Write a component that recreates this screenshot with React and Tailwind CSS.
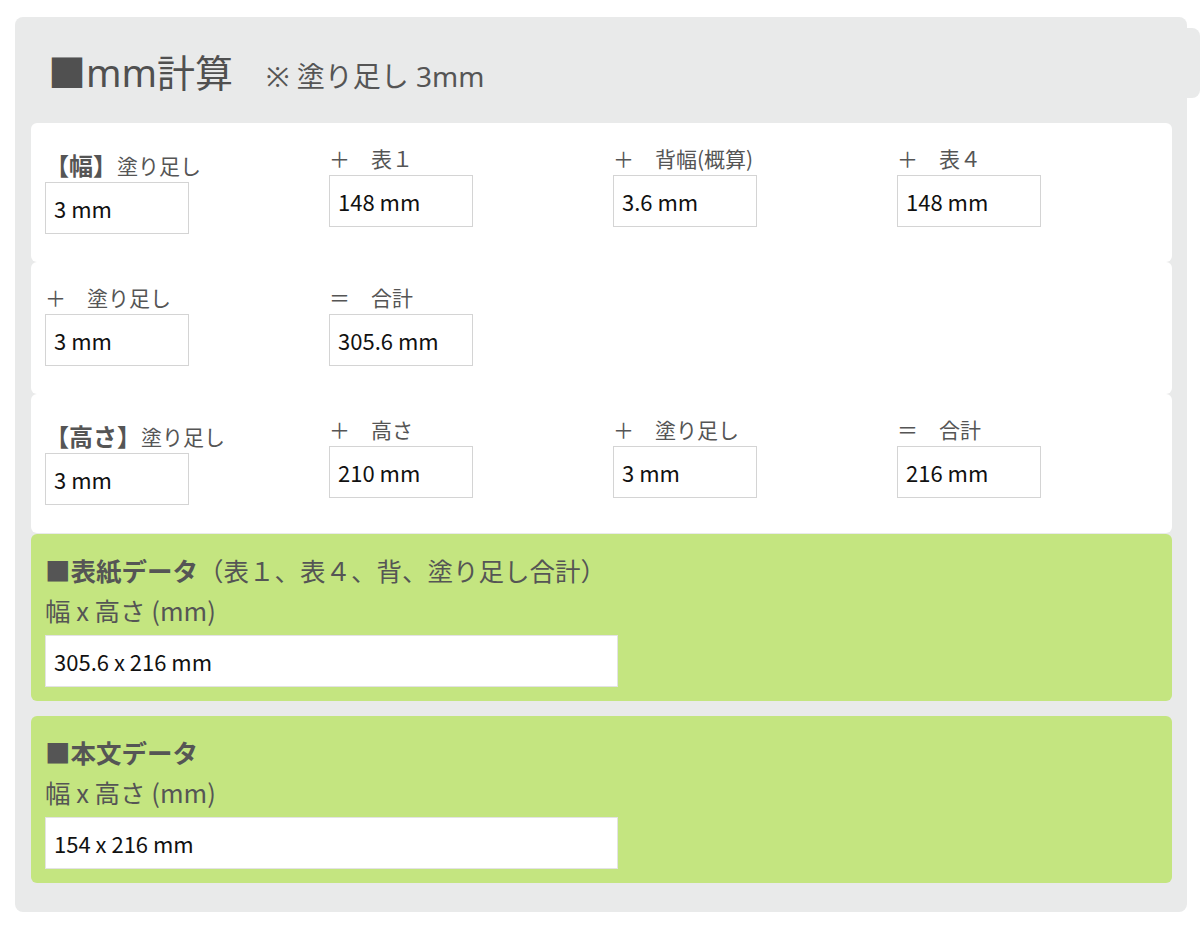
import React from 'react';

const jp = { fontFamily: '"Noto Sans CJK JP", "Noto Sans", sans-serif' };
const latin = { fontFamily: '"Noto Sans", "Noto Sans CJK JP", sans-serif' };

function Field({ label, value, first }) {
  return (
    <div className="w-[284px] shrink-0">
      {first ? (
        <div className="h-[38px] flex items-end pb-[3px] text-[#555] text-[21px] leading-[28px]">
          <span className="font-bold text-[24px]">【{first}】</span>
          <span>{label}</span>
        </div>
      ) : (
        <div className="h-[31px] text-[#555] text-[21px] leading-[28px] whitespace-pre">{label}</div>
      )}
      <div className="w-[144px] h-[52px] border border-[#d4d4d4] bg-white flex items-center px-[8px] text-[22px] text-[#111]">
        {value}
      </div>
    </div>
  );
}

function Card({ children }) {
  return (
    <div className="bg-white rounded-[6px] pl-[14px] pt-[21px] pb-[28px] flex items-start">
      {children}
    </div>
  );
}

function GreenCard({ title, note, value }) {
  return (
    <div className="bg-[#c4e580] rounded-[6px] pl-[14px] pt-[16px] pb-[14px]">
      <div className="text-[25.5px] leading-[40px] text-[#555]">
        <span className="font-bold">{title}</span>
        {note}
      </div>
      <div className="text-[25.5px] leading-[40px] text-[#555]">幅 x 高さ (mm)</div>
      <div className="mt-[5px] w-[573px] h-[52px] bg-white border border-[#e3e3e3] flex items-center px-[8px] text-[22px] text-[#111]">
        {value}
      </div>
    </div>
  );
}

export default function App() {
  return (
    <div className="min-h-screen bg-white pt-[17px] pl-[15px]" style={jp}>
      <div className="w-[1172px] bg-[#e9eaea] rounded-[8px] pt-[11px] pb-[29px]">
        {/* 見出し */}
        <div className="-mr-[13px] h-[70px] bg-[#e9eaea] rounded-r-[8px] pl-[33px] pt-[25px] flex items-baseline">
          <span className="text-[38px] leading-none text-[#505050]" style={latin}>
            ■mm計算
          </span>
          <span className="ml-[33px] text-[28px] leading-none text-[#555]" style={latin}>
            ※ 塗り足し 3mm
          </span>
        </div>

        <div className="mt-[25px] ml-[16px] mr-[15px]">
          {/* 幅 */}
          <Card>
            <Field first="幅" label="塗り足し" value="3 mm" />
            <Field label="＋　表１" value="148 mm" />
            <Field label="＋　背幅(概算)" value="3.6 mm" />
            <Field label="＋　表４" value="148 mm" />
          </Card>
          <Card>
            <Field label="＋　塗り足し" value="3 mm" />
            <Field label="＝　合計" value="305.6 mm" />
          </Card>

          {/* 高さ */}
          <Card>
            <Field first="高さ" label="塗り足し" value="3 mm" />
            <Field label="＋　高さ" value="210 mm" />
            <Field label="＋　塗り足し" value="3 mm" />
            <Field label="＝　合計" value="216 mm" />
          </Card>

          <div className="mt-[1px] flex flex-col gap-[15px]">
            <GreenCard title="■表紙データ" note="（表１、表４、背、塗り足し合計）" value="305.6 x 216 mm" />
            <GreenCard title="■本文データ" value="154 x 216 mm" />
          </div>
        </div>
      </div>
    </div>
  );
}
